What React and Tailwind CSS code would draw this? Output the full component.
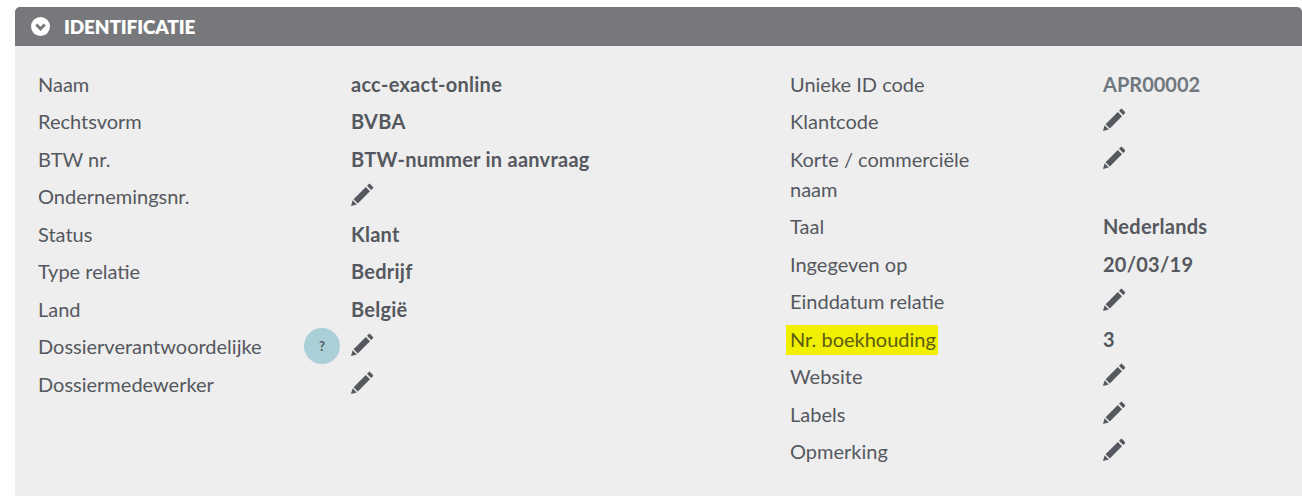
const leftRows = [
  { label: 'Naam', value: 'acc-exact-online' },
  { label: 'Rechtsvorm', value: 'BVBA' },
  { label: 'BTW nr.', value: 'BTW-nummer in aanvraag' },
  { label: 'Ondernemingsnr.' },
  { label: 'Status', value: 'Klant' },
  { label: 'Type relatie', value: 'Bedrijf' },
  { label: 'Land', value: 'België' },
  { label: 'Dossierverantwoordelijke', help: true },
  { label: 'Dossiermedewerker' },
];

const rightRows = [
  { label: 'Unieke ID code', value: 'APR00002', muted: true },
  { label: 'Klantcode' },
  { label: 'Korte / commerciële naam' },
  { label: 'Taal', value: 'Nederlands' },
  { label: 'Ingegeven op', value: '20/03/19' },
  { label: 'Einddatum relatie' },
  { label: 'Nr. boekhouding', value: '3', marked: true },
  { label: 'Website' },
  { label: 'Labels' },
  { label: 'Opmerking' },
];

function Pencil() {
  return (
    <svg viewBox="0 0 24 24" className="block w-[24px] h-[24px] mt-[2px] -ml-[1px]" fill="#55585e">
      <path d="M1 23 L2.6 17.2 L6.8 21.4 Z" />
      <path d="M3.6 16.2 L15.8 4 L20 8.2 L7.8 20.4 Z" />
      <path d="M17 2.8 L18.6 1.2 C19.2 .7 19.8 .7 20.3 1.2 L22.8 3.7 C23.3 4.2 23.3 4.8 22.8 5.4 L21.2 7 Z" />
    </svg>
  );
}

function Row({ row }) {
  return (
    <div className="flex py-[3.75px]">
      <div className="w-[313px] h-max shrink-0 flex justify-between pr-[11px]">
        <span className={row.marked ? 'relative z-0' : 'max-w-[200px]'}>
          {row.marked && <span className="absolute -z-10 -left-[4px] -right-[2px] top-[1px] bottom-[-1px] bg-[#f0f000]" />}
          <span className={row.marked ? 'text-[#5c5c14]' : ''}>{row.label}</span>
        </span>
        {row.help && (
          <span className="w-[36px] h-[36px] -my-[3px] rounded-full bg-[#aacfd6] flex items-center justify-center text-[13px] font-bold">?</span>
        )}
      </div>
      <div className={`font-bold ${row.muted ? 'text-[#6f777f]' : 'tracking-[0.25px]'}`}>
        {row.value ? row.value : <Pencil />}
      </div>
    </div>
  );
}

export default function App() {
  return (
    <div className="h-[498px] overflow-hidden bg-white pt-[7px] pl-[15px] font-['Lato','Liberation_Sans',sans-serif] text-[20px] leading-[30px] text-[#55585e]">
      <div className="h-[489px] flex flex-col">
        <div className="h-[39px] shrink-0 bg-[#76787b] rounded-t-[5px] flex items-center pl-[16px] gap-[14px] text-white">
          <svg viewBox="0 0 20 20" className="w-[19px] h-[19px]">
            <circle cx="10" cy="10" r="10" fill="#fff" />
            <path d="M5.5 8 L10 12.5 L14.5 8" fill="none" stroke="#76787b" strokeWidth="3" />
          </svg>
          <span className="text-[19px] font-extrabold uppercase tracking-[-0.15px]">Identificatie</span>
        </div>
        <div className="flex-1 bg-[#eeeeee] pt-[19px] pl-[23px] flex">
          <div className="w-[752px] shrink-0">
            {leftRows.map((row) => (
              <Row key={row.label} row={row} />
            ))}
          </div>
          <div>
            {rightRows.map((row) => (
              <Row key={row.label} row={row} />
            ))}
          </div>
        </div>
      </div>
    </div>
  );
}
